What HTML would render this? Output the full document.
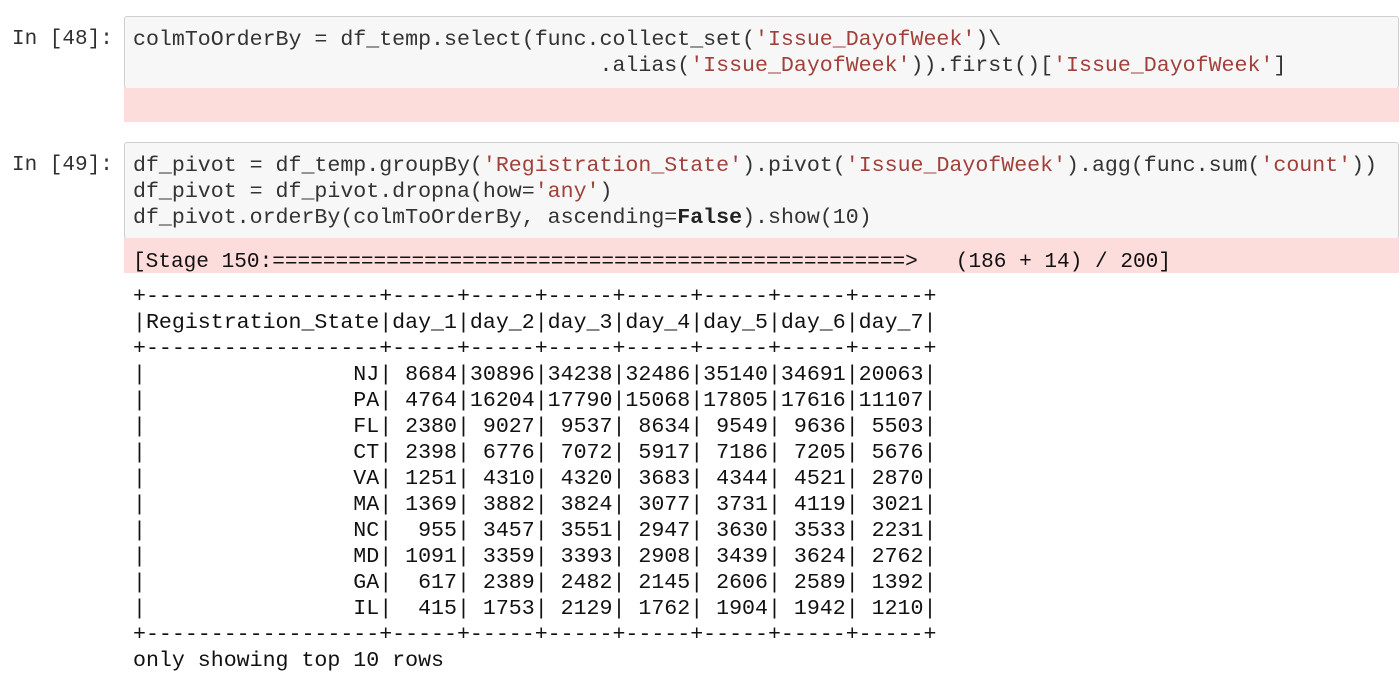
<!DOCTYPE html>
<html><head><meta charset="utf-8"><style>
body{margin:0;width:1400px;height:693px;background:#fff;overflow:hidden;position:relative;font-family:"Liberation Mono",monospace;}
.p{position:absolute;left:12px;font-size:21px;color:#303030;line-height:26px;white-space:pre;}
.box{position:absolute;left:124px;width:1273px;background:#f7f7f7;border:1px solid #cfcfcf;border-radius:3px;}
.code{position:absolute;left:133px;font-size:21.6px;line-height:26px;color:#333;white-space:pre;}
.s{color:#a1403a}.k{font-weight:bold;color:#222}.n{color:#333}
.pink{position:absolute;left:124px;width:1275px;background:#fddcdc;}
.out{position:absolute;left:133px;font-size:21.6px;line-height:26px;color:#111;white-space:pre;}
</style></head><body>
<div class="p" style="top:27px">In [48]:</div>
<div class="box" style="top:16px;height:71px"></div>
<div class="code" style="top:27px">colmToOrderBy = df_temp.select(func.collect_set(<span class="s">'Issue_DayofWeek'</span>)\
                                    .alias(<span class="s">'Issue_DayofWeek'</span>)).first()[<span class="s">'Issue_DayofWeek'</span>]</div>
<div class="pink" style="top:88px;height:34px"></div>

<div class="p" style="top:153px">In [49]:</div>
<div class="box" style="top:142px;height:95px"></div>
<div class="code" style="top:153px">df_pivot = df_temp.groupBy(<span class="s">'Registration_State'</span>).pivot(<span class="s">'Issue_DayofWeek'</span>).agg(func.sum(<span class="s">'count'</span>))
df_pivot = df_pivot.dropna(how=<span class="s">'any'</span>)
df_pivot.orderBy(colmToOrderBy, ascending=<span class="k">False</span>).show(10)</div>
<div class="pink" style="top:238px;height:35px"></div>
<div class="out" style="top:249px;font-size:21.1px">[Stage 150:==================================================>   (186 + 14) / 200]</div>
<div class="out" style="top:284px">+------------------+-----+-----+-----+-----+-----+-----+-----+
|Registration_State|day_1|day_2|day_3|day_4|day_5|day_6|day_7|
+------------------+-----+-----+-----+-----+-----+-----+-----+
|                NJ| 8684|30896|34238|32486|35140|34691|20063|
|                PA| 4764|16204|17790|15068|17805|17616|11107|
|                FL| 2380| 9027| 9537| 8634| 9549| 9636| 5503|
|                CT| 2398| 6776| 7072| 5917| 7186| 7205| 5676|
|                VA| 1251| 4310| 4320| 3683| 4344| 4521| 2870|
|                MA| 1369| 3882| 3824| 3077| 3731| 4119| 3021|
|                NC|  955| 3457| 3551| 2947| 3630| 3533| 2231|
|                MD| 1091| 3359| 3393| 2908| 3439| 3624| 2762|
|                GA|  617| 2389| 2482| 2145| 2606| 2589| 1392|
|                IL|  415| 1753| 2129| 1762| 1904| 1942| 1210|
+------------------+-----+-----+-----+-----+-----+-----+-----+
only showing top 10 rows</div>
</body></html>
